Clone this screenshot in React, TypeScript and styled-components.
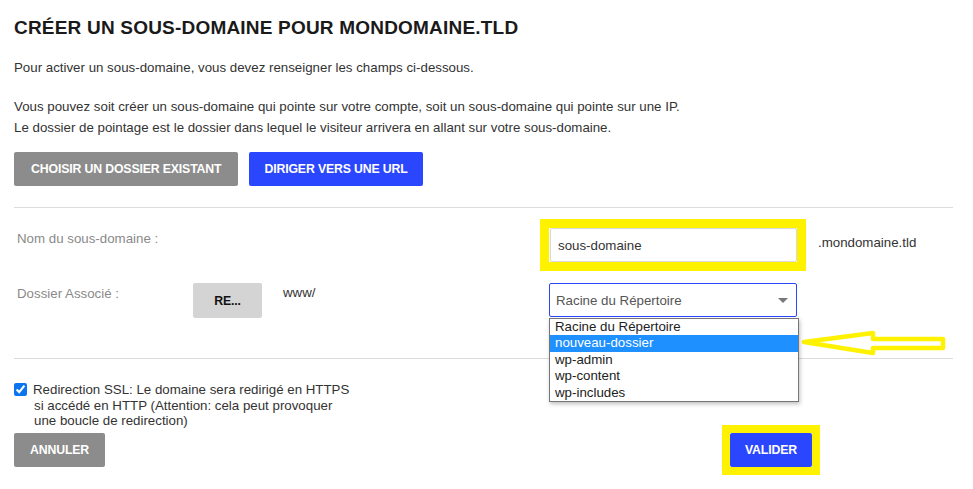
import React from "react";
import styled, { createGlobalStyle } from "styled-components";

const Global = createGlobalStyle`
  html, body { margin: 0; padding: 0; background: #fff; }
  body { font-family: "Liberation Sans", Arial, sans-serif; color: #333; }
  * { box-sizing: border-box; }
`;

const Page = styled.div`
  position: relative;
  width: 973px;
  height: 489px;
  padding: 0 20px 0 14px;
  overflow: hidden;
`;

const Title = styled.h1`
  margin: 17px 0 0;
  font-size: 19px;
  line-height: 22px;
  font-weight: 700;
  letter-spacing: 0.2px;
  color: #1a1a1a;
`;

const Para = styled.p<{ $mt: number }>`
  margin: ${(p) => p.$mt}px 0 0;
  font-size: 13.3px;
  line-height: 21px;
  color: #333;
`;

const ButtonRow = styled.div`
  display: flex;
  gap: 11px;
  margin-top: 14px;
`;

const Btn = styled.button<{ $variant: "gray" | "blue" | "light"; $px?: number }>`
  height: 34px;
  padding: 0 ${(p) => p.$px ?? 15}px;
  border: none;
  border-radius: 2px;
  font-family: "Liberation Sans", Arial, sans-serif;
  font-weight: 700;
  font-size: 12.3px;
  letter-spacing: -0.15px;
  cursor: pointer;
  background: ${(p) =>
    p.$variant === "gray" ? "#8c8c8c" : p.$variant === "blue" ? "#2a47ff" : "#d4d4d4"};
  color: ${(p) => (p.$variant === "light" ? "#111" : "#fff")};
`;

const ReBtn = styled(Btn)`
  width: 69px;
  height: 35px;
  padding: 0;
`;

const Divider = styled.hr<{ $mt: number }>`
  margin: ${(p) => p.$mt}px 0 0;
  border: none;
  border-top: 1px solid #dcdcdc;
`;

const Form = styled.div`
  display: grid;
  grid-template-columns: 176px 90px 266px 248px 1fr;
  row-gap: 21px;
  align-items: start;
  padding-left: 3px;
  margin-top: 20px;
`;

const Label = styled.div`
  font-size: 13.3px;
  line-height: 15px;
  padding-top: 3px;
  color: #8a8a8a;
`;

const PlainText = styled.div<{ $pt: number; $pl?: number }>`
  font-size: 13.3px;
  line-height: 15px;
  padding-top: ${(p) => p.$pt}px;
  padding-left: ${(p) => p.$pl ?? 0}px;
  color: #333;
`;

const Highlight = styled.div<{ $size: number }>`
  box-shadow: 0 0 0 ${(p) => p.$size}px #fff200;
`;

const TextInput = styled.input`
  display: block;
  width: 247px;
  height: 34px;
  margin-left: 1px;
  padding: 0 7px;
  border: 1px solid #d9d9d9;
  border-radius: 2px;
  font-family: "Liberation Sans", Arial, sans-serif;
  font-size: 13.3px;
  color: #333;
  outline: none;
`;

const SelectWrap = styled.div`
  position: relative;
`;

const SelectBox = styled.div`
  display: flex;
  align-items: center;
  justify-content: space-between;
  height: 34px;
  padding: 0 7px 0 6px;
  border: 1px solid #2a47ff;
  border-radius: 2px;
  font-size: 13.3px;
  color: #555;
  background: #fff;
`;

const Caret = styled.span`
  width: 0;
  height: 0;
  border-left: 5px solid transparent;
  border-right: 5px solid transparent;
  border-top: 5px solid #777;
  margin-right: 1px;
`;

const OptionList = styled.ul`
  position: absolute;
  top: 35px;
  left: 0;
  width: 250px;
  margin: 0;
  padding: 0;
  list-style: none;
  background: #fff;
  border: 1px solid #767676;
  box-shadow: 1px 2px 4px rgba(0, 0, 0, 0.25);
  z-index: 2;
`;

const Option = styled.li<{ $active?: boolean }>`
  height: 16.4px;
  line-height: 16.4px;
  padding-left: 5px;
  font-size: 13.3px;
  color: ${(p) => (p.$active ? "#fff" : "#222")};
  background: ${(p) => (p.$active ? "#1e90ff" : "transparent")};
`;

const CheckRow = styled.label`
  display: flex;
  align-items: flex-start;
  gap: 6px;
  margin-top: 23px;
  font-size: 13.3px;
  line-height: 15.5px;
  color: #333;
`;

const Check = styled.input`
  width: 13px;
  height: 13px;
  margin: 1px 0 0;
  accent-color: #0b75f0;
`;

const CheckText = styled.span`
  display: block;
`;

const Indent = styled.span`
  padding-left: 1px;
`;

const Footer = styled.div`
  display: flex;
  justify-content: space-between;
  width: 798px;
  margin-top: 4px;
`;

const ArrowSvg = styled.svg`
  position: absolute;
  left: 798px;
  top: 327px;
  overflow: visible;
`;

const options = ["Racine du Répertoire", "nouveau-dossier", "wp-admin", "wp-content", "wp-includes"];

export default function App() {
  return (
    <>
      <Global />
      <Page>
        <Title>CRÉER UN SOUS-DOMAINE POUR MONDOMAINE.TLD</Title>
        <Para $mt={18}>Pour activer un sous-domaine, vous devez renseigner les champs ci-dessous.</Para>
        <Para $mt={18}>
          Vous pouvez soit créer un sous-domaine qui pointe sur votre compte, soit un sous-domaine qui pointe sur une IP.
          <br />
          Le dossier de pointage est le dossier dans lequel le visiteur arrivera en allant sur votre sous-domaine.
        </Para>
        <ButtonRow>
          <Btn $variant="gray" $px={17}>CHOISIR UN DOSSIER EXISTANT</Btn>
          <Btn $variant="blue">DIRIGER VERS UNE URL</Btn>
        </ButtonRow>
        <Divider $mt={21} />
        <Form>
          <Label>Nom du sous-domaine :</Label>
          <div />
          <div />
          <Highlight $size={9}>
            <TextInput defaultValue="sous-domaine" readOnly />
          </Highlight>
          <PlainText $pt={7} $pl={21}>.mondomaine.tld</PlainText>

          <Label>Dossier Associé :</Label>
          <ReBtn $variant="light">RE...</ReBtn>
          <PlainText $pt={2}>www/</PlainText>
          <SelectWrap>
            <SelectBox>
              <span>Racine du Répertoire</span>
              <Caret />
            </SelectBox>
            <OptionList>
              {options.map((o, i) => (
                <Option key={o} $active={i === 1}>
                  {o}
                </Option>
              ))}
            </OptionList>
          </SelectWrap>
          <div />
        </Form>
        <Divider $mt={40} />
        <CheckRow>
          <Check type="checkbox" defaultChecked />
          <CheckText>
            Redirection SSL: Le domaine sera redirigé en HTTPS
            <br />
            <Indent>si accédé en HTTP (Attention: cela peut provoquer</Indent>
            <br />
            <Indent>une boucle de redirection)</Indent>
          </CheckText>
        </CheckRow>
        <Footer>
          <Btn $variant="gray" $px={16}>ANNULER</Btn>
          <Highlight $size={8}>
            <Btn $variant="blue" $px={15}>VALIDER</Btn>
          </Highlight>
        </Footer>
        <ArrowSvg width="150" height="30" viewBox="798 327 150 30">
          <polygon
            points="804,342 873,333 873,339 943,339 943,348 873,348 873,353"
            fill="none"
            stroke="#fff200"
            strokeWidth="4.5"
            strokeLinejoin="round"
          />
        </ArrowSvg>
      </Page>
    </>
  );
}
